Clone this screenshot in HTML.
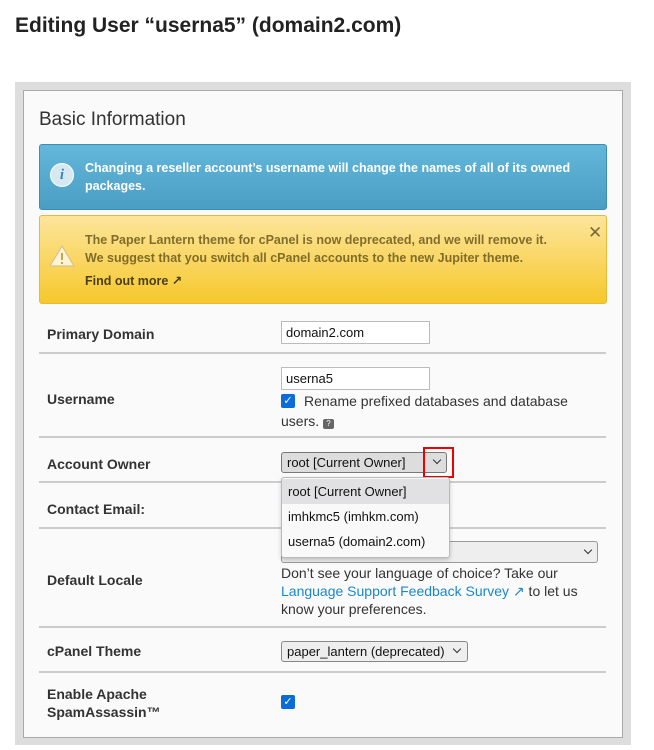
<!DOCTYPE html>
<html><head><meta charset="utf-8"><style>
body{margin:0;width:654px;height:750px;background:#fff;font-family:"Liberation Sans","DejaVu Sans",sans-serif;color:#333;position:relative;overflow:hidden}
.a{position:absolute}
h1{position:absolute;left:15px;top:14px;margin:0;font-size:21px;font-weight:bold;color:#222}
.lbl{position:absolute;left:47px;font-size:14px;font-weight:bold;color:#333}
.sep{position:absolute;left:39px;width:567px;height:2px;background:#ccc}
.inp{position:absolute;left:281px;width:149px;height:23px;border:1px solid #bbb;background:#fff;font-size:13px;line-height:22px;padding-left:4px;box-sizing:border-box;color:#111}
.cb{position:absolute;width:14px;height:14px;background:#0b6bd8;border-radius:2px;color:#fff;font-size:11px;line-height:14px;text-align:center;font-weight:bold}
.txt{font-size:14px;color:#333}
.chev{position:absolute;width:5px;height:5px;border-right:1.5px solid #333;border-bottom:1.5px solid #333;transform:rotate(45deg)}
</style></head><body>
<h1>Editing User “userna5” (domain2.com)</h1>
<div class="a" style="left:15px;top:82px;width:616px;height:663px;background:#ddd"></div>
<div class="a" style="left:23px;top:90px;width:598px;height:646px;background:#fafafa;border:1px solid #aaa"></div>
<div class="a" style="left:39px;top:109px;font-size:19px;color:#333">Basic Information</div>
<div class="a" style="left:39px;top:144px;width:566px;height:64px;border:1px solid #3d8db5;border-radius:3px;background:linear-gradient(#63b7da,#4a9ec4)"></div>
<div class="a" style="left:50px;top:163px;width:22px;height:22px;border-radius:50%;background:#d6e9f3;border:1px solid #fff;color:#3a86aa;font:italic bold 15px 'Liberation Serif',serif;text-align:center;line-height:22px">i</div>
<div class="a" style="left:85px;top:159px;width:510px;font-size:12.5px;font-weight:bold;color:#fff;line-height:18px">Changing a reseller account’s username will change the names of all of its owned packages.</div>
<div class="a" style="left:39px;top:215px;width:566px;height:87px;border:1px solid #e8b93a;border-radius:3px;background:linear-gradient(#fde59c,#f6c82b)"></div>
<svg class="a" style="left:49px;top:244px" width="26" height="24"><path d="M13 2 L25 22 L1 22 Z" fill="#fdf3d6" stroke="#d9c28a" stroke-width="1.2" stroke-linejoin="round"/><rect x="12" y="9" width="2" height="7" fill="#c8a44c"/><rect x="12" y="18" width="2" height="2" fill="#c8a44c"/></svg>
<div class="a" style="left:85px;top:231px;font-size:12.5px;color:#6b5a1f;line-height:18px;font-weight:bold;opacity:.85">The Paper Lantern theme for cPanel is now deprecated, and we will remove it.<br>We suggest that you switch all cPanel accounts to the new Jupiter theme.</div>
<div class="a" style="left:85px;top:273px;font-size:12.5px;font-weight:bold;color:#4a3f1a">Find out more ↗</div>
<div class="a" style="left:588px;top:223px;font-size:17px;color:#7a6a3a">✕</div>

<div class="lbl" style="top:326px">Primary Domain</div>
<div class="inp" style="top:321px">domain2.com</div>
<div class="sep" style="top:352px"></div>
<div class="lbl" style="top:391px">Username</div>
<div class="inp" style="top:367px">userna5</div>
<div class="cb" style="left:281px;top:394px">✓</div>
<div class="a txt" style="left:281px;top:391px;width:310px;line-height:20px"><span style="margin-left:23px">Rename prefixed databases and database</span><br>users. <span style="display:inline-block;width:11px;height:10px;background:#666;border-radius:2px;color:#fff;font-size:8px;line-height:10px;text-align:center">?</span></div>
<div class="sep" style="top:436px"></div>
<div class="lbl" style="top:456px">Account Owner</div>
<div class="a" style="left:281px;top:452px;width:166px;height:21px;border:1px solid #777;border-radius:3px;background:#ddd;font-size:13px;line-height:20px;padding-left:5px;box-sizing:border-box;color:#111">root [Current Owner]</div>
<div class="chev" style="left:434px;top:457px"></div>
<div class="a" style="left:423px;top:447px;width:31px;height:31px;border:2px solid #e00;box-sizing:border-box"></div>
<div class="sep" style="top:481px"></div>
<div class="lbl" style="top:501px">Contact Email:</div>
<div class="sep" style="top:527px"></div>
<div class="a" style="left:281px;top:541px;width:317px;height:22px;border:1px solid #999;border-radius:3px;background:#eee;box-sizing:border-box"></div>
<div class="chev" style="left:585px;top:547px"></div>
<div class="a" style="left:281px;top:477px;width:167px;height:79px;border:1px solid #bbb;border-radius:3px;background:#f9f9f9;box-shadow:0 2px 4px rgba(0,0,0,.2);font-size:13px;color:#111"><div style="background:#e1e1e4;height:25px;line-height:25px;padding-left:6px;margin-top:1px">root [Current Owner]</div><div style="height:25px;line-height:25px;padding-left:6px">imhkmc5 (imhkm.com)</div><div style="height:25px;line-height:25px;padding-left:6px">userna5 (domain2.com)</div></div>
<div class="lbl" style="top:572px">Default Locale</div>
<div class="a txt" style="left:281px;top:564px;width:320px;line-height:18px">Don’t see your language of choice? Take our <span style="color:#1b87c9">Language Support Feedback Survey ↗</span> to let us know your preferences.</div>
<div class="sep" style="top:626px"></div>
<div class="lbl" style="top:643px">cPanel Theme</div>
<div class="a" style="left:281px;top:641px;width:187px;height:21px;border:1px solid #888;border-radius:3px;background:#eee;font-size:13px;line-height:20px;padding-left:5px;box-sizing:border-box;color:#111">paper_lantern (deprecated)</div>
<div class="chev" style="left:454px;top:646px"></div>
<div class="sep" style="top:671px"></div>
<div class="lbl" style="top:685px;line-height:18px">Enable Apache<br>SpamAssassin™</div>
<div class="cb" style="left:281px;top:695px">✓</div>
</body></html>
